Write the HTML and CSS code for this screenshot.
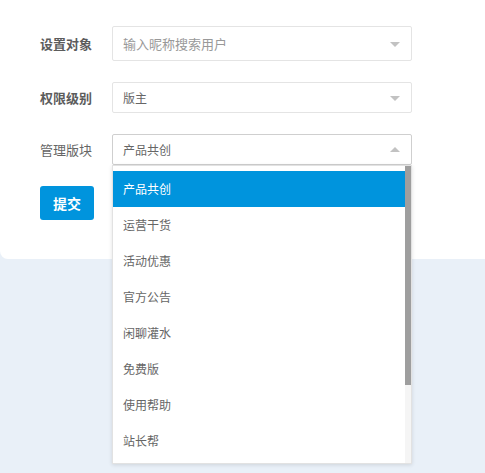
FILE: index.html
```html
<!DOCTYPE html>
<html lang="zh-CN">
<head>
  <meta charset="UTF-8">
  <meta name="viewport" content="width=device-width, initial-scale=1.0">
  <title>版主设置</title>
  <link rel="stylesheet" href="styles.css">
</head>
<body>

  <!-- Moderator form -->
  <div class="card">
    <div class="row">
      <label class="label bold">设置对象</label>
      <div class="select tall">
        <span class="placeholder">输入昵称搜索用户</span>
        <i class="arrow"></i>
      </div>
    </div>

    <div class="row">
      <label class="label bold">权限级别</label>
      <div class="select">
        <span class="value">版主</span>
        <i class="arrow"></i>
      </div>
    </div>

    <div class="row">
      <label class="label">管理版块</label>
      <div class="select open">
        <span class="value">产品共创</span>
        <i class="arrow up"></i>

        <!-- Open dropdown list with its scrollbar -->
        <div class="dropdown">
          <ul class="options">
            <li class="active">产品共创</li>
            <li>运营干货</li>
            <li>活动优惠</li>
            <li>官方公告</li>
            <li>闲聊灌水</li>
            <li>免费版</li>
            <li>使用帮助</li>
            <li>站长帮</li>
          </ul>
          <div class="scrollbar"><div class="thumb"></div></div>
        </div>
      </div>
    </div>

    <button class="submit">提交</button>
  </div>

</body>
</html>
```

FILE: styles.css
```css
body {
  margin: 0;
  font-family: "Noto Sans CJK SC", "Noto Sans", sans-serif;
  background: #e9f0f8;
  height: 473px;
  overflow: hidden;
}

.card {
  background: #fff;
  height: 259px;
  box-sizing: border-box;
  padding: 26px 0 0 40px;
  border-radius: 0 0 0 8px;
}

.row {
  display: flex;
  align-items: center;
  margin-bottom: 21px;
}

.label {
  width: 72px;
  font-size: 13px;
  color: #666;
}

.label.bold {
  font-weight: 700;
  color: #5c5c5c;
}

.select {
  position: relative;
  width: 300px;
  height: 31px;
  box-sizing: border-box;
  border: 1px solid #e4e4e4;
  border-radius: 2px;
  padding: 0 10px;
  display: flex;
  align-items: center;
  font-size: 12px;
  color: #666;
}

.select.tall {
  height: 35px;
}

.select.open {
  border-color: #cfcfcf;
}

.placeholder {
  font-size: 13px;
  color: #999;
}

.arrow {
  position: absolute;
  right: 11px;
  top: 50%;
  margin-top: -2px;
  width: 0;
  height: 0;
  border-left: 5px solid transparent;
  border-right: 5px solid transparent;
  border-top: 5px solid #c2c2c2;
}

.arrow.up {
  margin-top: -3px;
  border-top: none;
  border-bottom: 5px solid #c2c2c2;
}

.dropdown {
  position: absolute;
  left: -1px;
  top: 30px;
  width: 300px;
  height: 299px;
  box-sizing: border-box;
  display: flex;
  background: #fff;
  border: 1px solid #e2e2e2;
  box-shadow: 0 1px 4px rgba(0, 0, 0, 0.12);
  overflow: hidden;
  z-index: 10;
}

.options {
  flex: 1;
  margin: 0;
  padding: 5px 0;
  list-style: none;
}

.options li {
  height: 36px;
  line-height: 36px;
  padding-left: 10px;
  font-size: 12px;
  color: #666;
}

.options li.active {
  background: #0094dd;
  color: #fff;
}

.scrollbar {
  width: 6px;
  background: #f5f5f5;
}

.scrollbar .thumb {
  height: 219px;
  background: #9e9e9e;
}

.submit {
  width: 54px;
  height: 34px;
  border: none;
  border-radius: 3px;
  background: #0094dd;
  color: #fff;
  font-family: inherit;
  font-size: 14px;
  font-weight: 700;
  padding: 0;
}
```
